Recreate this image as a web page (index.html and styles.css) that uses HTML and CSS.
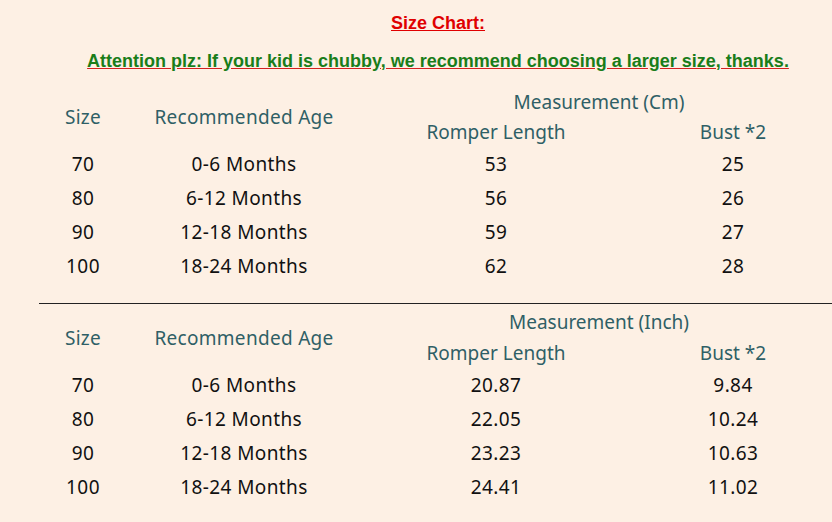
FILE: index.html
```html
<!DOCTYPE html>
<html>
<head>
<meta charset="utf-8">
<link rel="stylesheet" href="styles.css">
</head>
<body>
<div class="page">
  <h1 class="title">Size Chart:</h1>
  <p class="note">Attention plz: If your kid is chubby, we recommend choosing a larger size, thanks.</p>
  <table class="chart">
    <colgroup><col class="c1"><col class="c2"><col class="c3"><col class="c4"></colgroup>
    <tr class="h1"><th rowspan="2" class="rs">Size</th><th rowspan="2" class="rs">Recommended Age</th><th colspan="2">Measurement (Cm)</th></tr>
    <tr class="h2"><th>Romper Length</th><th>Bust *2</th></tr>
    <tr><td>70</td><td>0-6 Months</td><td>53</td><td>25</td></tr>
    <tr><td>80</td><td>6-12 Months</td><td>56</td><td>26</td></tr>
    <tr><td>90</td><td>12-18 Months</td><td>59</td><td>27</td></tr>
    <tr><td>100</td><td>18-24 Months</td><td>62</td><td>28</td></tr>
  </table>
  <hr class="rule">
  <table class="chart second">
    <colgroup><col class="c1"><col class="c2"><col class="c3"><col class="c4"></colgroup>
    <tr class="h1"><th rowspan="2" class="rs">Size</th><th rowspan="2" class="rs">Recommended Age</th><th colspan="2">Measurement (Inch)</th></tr>
    <tr class="h2"><th>Romper Length</th><th>Bust *2</th></tr>
    <tr><td>70</td><td>0-6 Months</td><td>20.87</td><td>9.84</td></tr>
    <tr><td>80</td><td>6-12 Months</td><td>22.05</td><td>10.24</td></tr>
    <tr><td>90</td><td>12-18 Months</td><td>23.23</td><td>10.63</td></tr>
    <tr><td>100</td><td>18-24 Months</td><td>24.41</td><td>11.02</td></tr>
  </table>
</div>
</body>
</html>
```
FILE: styles.css
```css
html { overflow: hidden; background: #fdf0e4; }
body { margin: 0; background: #fdf0e4; }
.page { margin-left: 40px; width: 796px; }
.title {
  margin: 0; padding-top: 12px; height: 25px;
  font: bold 18px/22px "Liberation Sans", Arial, sans-serif;
  color: #e00000; text-align: center;
  text-decoration: underline; text-decoration-color: #e00000;
}
.note {
  margin: 0; padding-top: 13px; height: 37px;
  font: bold 18px/22px "Liberation Sans", Arial, sans-serif;
  color: #1a7d1a; text-align: center;
  text-decoration: underline; text-decoration-color: #d42020;
}
.chart {
  border-collapse: collapse; table-layout: fixed; width: 796px;
  font-family: "Noto Sans", "Open Sans", sans-serif; font-size: 19px;
}
.c1 { width: 86px; } .c2 { width: 236px; } .c3 { width: 268px; } .c4 { width: 206px; }
.chart th, .chart td { padding: 0; text-align: center; vertical-align: middle; }
.chart th { font-weight: normal; color: #2f5f66; }
.chart .h1 th, .chart .h2 th { height: 30px; }
.chart .rs { vertical-align: middle; letter-spacing: 0.3px; }
.chart td { height: 34px; color: #111; letter-spacing: 0.4px; }
.rule { margin: 20px 0 0 -1px; border: 0; border-top: 1px solid #222; height: 0; width: 800px; }
.second { margin-top: 3px; }
.second .h2 th { height: 31px; }
```
